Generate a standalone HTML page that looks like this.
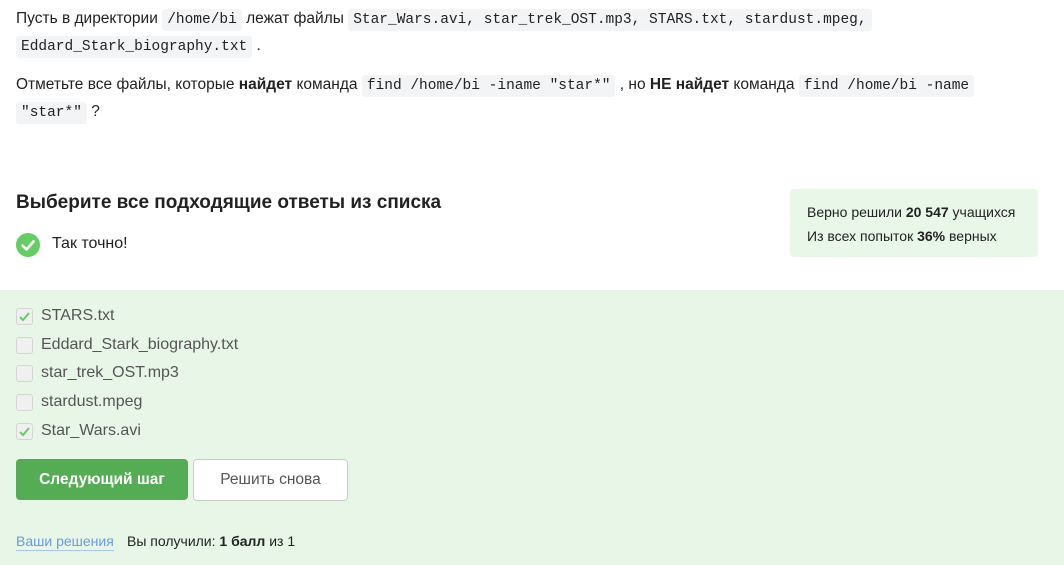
<!DOCTYPE html><html><head><meta charset="utf-8"><style>
body{margin:0;width:1064px;height:565px;overflow:hidden;background:#fff;font-family:"Liberation Sans",sans-serif;color:#222;position:relative}
.a{position:absolute}
code{font-family:"Liberation Mono",monospace;font-size:14.5px;background:#f3f4f5;padding:3px 5px;border-radius:3px}
p{margin:0;font-size:15.5px;line-height:26px;left:16px;width:1000px}
.cb{position:absolute;left:16px;width:15px;height:15px;border:1px solid #d4d4d4;border-radius:3px;background:#f0f0f0}
.lbl{position:absolute;left:41px;font-size:16px;color:#555}
</style></head><body>
<p class="a" style="top:6px">Пусть в директории <code>/home/bi</code> лежат файлы <code>Star_Wars.avi, star_trek_OST.mp3, STARS.txt, stardust.mpeg,</code><br><code>Eddard_Stark_biography.txt</code> .</p>
<p class="a" style="top:72px">Отметьте все файлы, которые <b>найдет</b> команда <code>find /home/bi -iname "star*"</code> , но <b>НЕ найдет</b> команда <code>find /home/bi -name</code><br><code>"star*"</code> ?</p>
<div class="a" style="left:16px;top:192px;font-size:19px;font-weight:bold;color:#222">Выберите все подходящие ответы из списка</div>
<svg class="a" style="left:16px;top:233px" width="24" height="24"><circle cx="12" cy="12" r="12" fill="#66cc66"/><path d="M6.5 12.5l4 4 7-8" stroke="#fff" stroke-width="2.6" fill="none" stroke-linecap="round" stroke-linejoin="round"/></svg>
<div class="a" style="left:52px;top:235px;font-size:16px">Так точно!</div>
<div class="a" style="left:790px;top:189px;width:248px;height:68px;background:#e8f7e8;border-radius:4px;font-size:14px;line-height:24px;padding:11px 0 0 17px;box-sizing:border-box">Верно решили <b>20 547</b> учащихся<br>Из всех попыток <b>36%</b> верных</div>
<div class="a" style="left:0;top:290px;width:1064px;height:275px;background:#e7f6e6"></div>
<div class="cb" style="top:308px"></div><svg class="a" style="left:18px;top:310px" width="13" height="13"><path d="M2 7l3 3 6-7" stroke="#6c6" stroke-width="2" fill="none"/></svg><div class="lbl" style="top:307px">STARS.txt</div>
<div class="cb" style="top:337px"></div><div class="lbl" style="top:336px">Eddard_Stark_biography.txt</div>
<div class="cb" style="top:365px"></div><div class="lbl" style="top:364px">star_trek_OST.mp3</div>
<div class="cb" style="top:394px"></div><div class="lbl" style="top:393px">stardust.mpeg</div>
<div class="cb" style="top:423px"></div><svg class="a" style="left:18px;top:425px" width="13" height="13"><path d="M2 7l3 3 6-7" stroke="#6c6" stroke-width="2" fill="none"/></svg><div class="lbl" style="top:422px">Star_Wars.avi</div>
<div class="a" style="left:16px;top:459px;width:172px;height:41px;background:#54ad54;border-radius:4px;color:#fff;font-weight:bold;font-size:15.5px;text-align:center;line-height:41px">Следующий шаг</div>
<div class="a" style="left:193px;top:459px;width:153px;height:40px;background:#fff;border:1px solid #ccc;border-radius:4px;color:#555;font-size:15.5px;text-align:center;line-height:40px">Решить снова</div>
<div class="a" style="left:16px;top:533px;font-size:14px;color:#6a9be0;border-bottom:1px solid #a9c6f0;line-height:17px">Ваши решения</div>
<div class="a" style="left:127px;top:533px;font-size:14px;color:#222;line-height:17px">Вы получили: <b>1 балл</b> из 1</div>
</body></html>
